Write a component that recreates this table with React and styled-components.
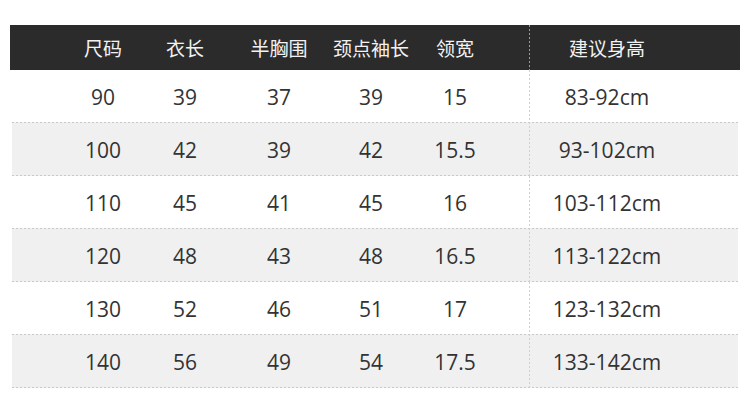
import React from 'react';
import styled, { createGlobalStyle } from 'styled-components';

const GlobalStyle = createGlobalStyle`
    html, body {
        margin: 0;
        padding: 0;
        background: #ffffff;
    }
    body {
        font-family: "Open Sans", "Noto Sans CJK SC", sans-serif;
    }
`;

const Page = styled.div`
    width: 750px;
    height: 402px;
    padding: 25px 10px 0;
    box-sizing: border-box;
`;

const Table = styled.div`
    width: 730px;
    display: flex;
    flex-direction: column;
`;

const dash = (color) =>
    `linear-gradient(to right, ${color} 50%, transparent 0)`;
const vdash = (color) =>
    `linear-gradient(to bottom, ${color} 50%, transparent 0)`;

const Header = styled.div`
    display: grid;
    grid-template-columns: 47px 92px 72px 116px 68px 100px 24px 156px 55px;
    height: 45px;
    background: #2b2b2b;
    color: #f2f2f2;
    font-family: "Noto Sans CJK SC", "Open Sans", sans-serif;
    font-size: 19px;
    align-items: stretch;
`;

const Row = styled.div`
    display: grid;
    grid-template-columns: ${(p) =>
        p.$shade
            ? '45px 92px 72px 116px 68px 100px 24px 156px 53px'
            : '47px 92px 72px 116px 68px 100px 24px 156px 55px'};
    height: ${(p) => (p.$shade ? '54px' : '52px')};
    margin: ${(p) => (p.$shade ? '0 2px' : '0')};
    color: #333333;
    font-size: 21px;
    background: ${(p) =>
        p.$shade
            ? `${dash('#c8c8c8')} top left / 4px 1px repeat-x,
               ${dash('#c8c8c8')} bottom left / 4px 1px repeat-x,
               #f0f0f0`
            : '#ffffff'};
`;

const Cell = styled.div`
    display: flex;
    align-items: center;
    justify-content: center;
    white-space: nowrap;
    padding-top: ${(p) => (p.$head ? '0' : '1px')};
`;

const Split = styled(Cell)`
    background: ${(p) => vdash(p.$head ? '#9a9a9a' : '#cfcfcf')} left top / 1px 4px
        repeat-y;
`;

const heads = ['尺码', '衣长', '半胸围', '颈点袖长', '领宽'];

const rows = [
    ['90', '39', '37', '39', '15', '83-92cm'],
    ['100', '42', '39', '42', '15.5', '93-102cm'],
    ['110', '45', '41', '45', '16', '103-112cm'],
    ['120', '48', '43', '48', '16.5', '113-122cm'],
    ['130', '52', '46', '51', '17', '123-132cm'],
    ['140', '56', '49', '54', '17.5', '133-142cm'],
];

const App = () => {
    return (
        <Page>
            <GlobalStyle />
            <Table>
                <Header>
                    <Cell $head />
                    {heads.map((h) => (
                        <Cell $head key={h}>
                            {h}
                        </Cell>
                    ))}
                    <Cell $head />
                    <Split $head>建议身高</Split>
                    <Cell $head />
                </Header>
                {rows.map((r, i) => (
                    <Row key={r[0]} $shade={i % 2 === 1}>
                        <Cell />
                        {r.slice(0, 5).map((v, j) => (
                            <Cell key={j}>{v}</Cell>
                        ))}
                        <Cell />
                        <Split>{r[5]}</Split>
                        <Cell />
                    </Row>
                ))}
            </Table>
        </Page>
    );
};

export default App;
